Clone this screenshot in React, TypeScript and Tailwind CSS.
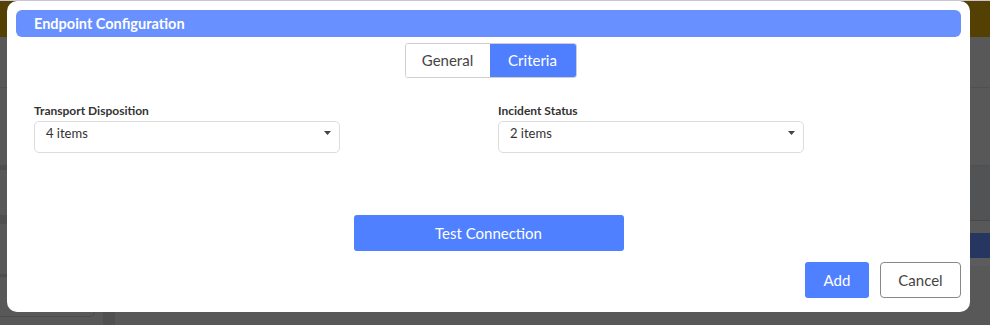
function Caret() {
  return (
    <svg width="7" height="4" viewBox="0 0 7 4" className="fill-[#444] mt-[8px]">
      <path d="M0 0 L7 0 L3.5 4 Z" />
    </svg>
  )
}

function SelectField({ label, value }: { label: string; value: string }) {
  return (
    <div className="flex flex-col">
      <label className="text-[12px] font-bold text-[#333] leading-[14px] mb-[3px]">{label}</label>
      <div className="w-[306px] h-[32px] border border-[#dcdcdc] rounded-[5px] flex items-start justify-between pt-[1px] pl-[11px] pr-[8px]">
        <span className="text-[13px] leading-[20px] text-[#333]">{value}</span>
        <Caret />
      </div>
    </div>
  )
}

export default function App() {
  return (
    <div className="relative w-[990px] h-[325px] overflow-hidden bg-[#585858] font-['Lato','Noto_Sans',sans-serif]">
      {/* dimmed page behind the dialog */}
      <div className="flex flex-col h-full">
        <div className="h-px bg-[#cbc6d6]" />
        <div className="h-[36px] bg-[#534002]" />
        <div className="flex-1 flex">
          <div className="w-[495px] flex flex-col">
            <div className="h-[50px]" />
            <div className="h-px bg-[#505050]" />
            <div className="h-[77px]" />
            <div className="h-[5px] bg-[#4e4e4e]" />
            <div className="h-[45px]" />
            <div className="h-[9px] bg-[#4f4f4f]" />
            <div className="h-[50px]" />
            <div className="h-[3px] bg-[#4e4e4e]" />
            <div className="flex-1 flex">
              <div className="w-[95px] h-[40px] rounded-br-[5px] border-r border-b border-[#4c4c4c]" />
              <div className="ml-[8px] w-[12px] bg-[#505050]" />
            </div>
          </div>
          <div className="flex-1 flex flex-col">
            <div className="h-[50px]" />
            <div className="h-px bg-[#505050]" />
            <div className="h-[77px]" />
            <div className="h-[55px] bg-[#525354] border-t border-[#4f4f4f]" />
            <div className="h-px bg-[#474747]" />
            <div className="h-[12px]" />
            <div className="h-[25px] bg-[#273561]" />
            <div className="h-[8px] bg-[#5c5c5c]" />
          </div>
        </div>
      </div>

      {/* dialog */}
      <div className="absolute left-[7px] top-[1px] w-[963px] h-[311px] bg-white rounded-[10px] px-[9px] pt-[9px] flex flex-col">
        <div className="h-[27px] rounded-[6px] bg-[#6890ff] pl-[18px] flex items-center text-white text-[14.5px] font-bold">
          Endpoint Configuration
        </div>

        <div className="flex justify-center mt-[6px] pl-[4px]">
          <div className="flex h-[35px] border border-[#cfcfcf] rounded-[3px] overflow-hidden">
            <button className="w-[84px] text-[15px] text-[#444] bg-white">General</button>
            <button className="w-[86px] text-[15px] text-white bg-[#4f7fff]">Criteria</button>
          </div>
        </div>

        <div className="grid grid-cols-[464px_1fr] pl-[18px] mt-[26px]">
          <SelectField label="Transport Disposition" value="4 items" />
          <SelectField label="Incident Status" value="2 items" />
        </div>

        <div className="flex justify-center mt-[62px]">
          <button className="w-[270px] h-[36px] rounded-[3px] bg-[#4f80ff] text-white text-[15px]">
            Test Connection
          </button>
        </div>

        <div className="flex justify-end gap-[11px] mt-[11px]">
          <button className="w-[64px] h-[36px] rounded-[3px] bg-[#4f80ff] text-white text-[15px]">Add</button>
          <button className="w-[81px] h-[36px] rounded-[4px] border border-[#888] bg-white text-[#444] text-[15px]">
            Cancel
          </button>
        </div>
      </div>
    </div>
  )
}
